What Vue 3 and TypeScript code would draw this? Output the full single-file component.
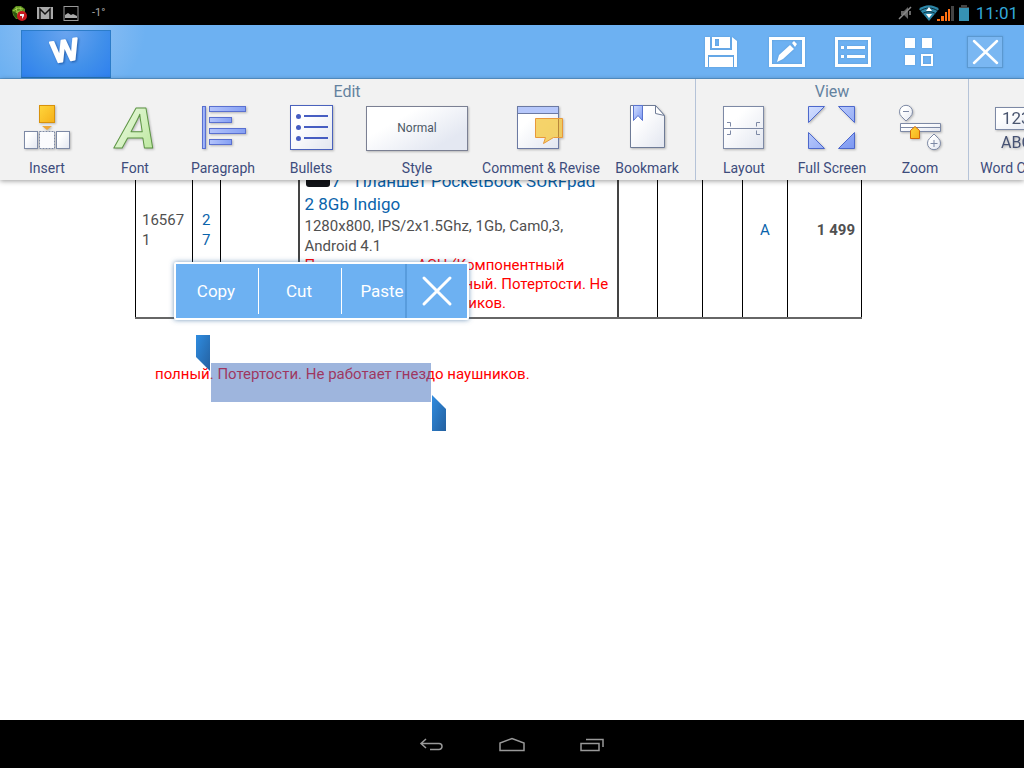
<script setup lang="ts">
import { ref } from 'vue'

interface Tool { id: string; label: string; size?: string }
interface Group { title: string; tools: Tool[] }

const groups: Group[] = [
  {
    title: 'Edit',
    tools: [
      { id: 'insert', label: 'Insert' },
      { id: 'font', label: 'Font' },
      { id: 'paragraph', label: 'Paragraph' },
      { id: 'bullets', label: 'Bullets' },
      { id: 'style', label: 'Style', size: 'wide' },
      { id: 'comment', label: 'Comment & Revise', size: 'wide' },
      { id: 'bookmark', label: 'Bookmark' },
    ],
  },
  {
    title: 'View',
    tools: [
      { id: 'layout', label: 'Layout' },
      { id: 'full', label: 'Full Screen' },
      { id: 'zoom', label: 'Zoom' },
    ],
  },
  { title: '', tools: [{ id: 'count', label: 'Word Count' }] },
]

const clipboardActions = ['Copy', 'Cut', 'Paste']
const menuOpen = ref(true)
</script>

<template>
  <div class="screen">
    <header class="status">
      <div class="notices">
        <svg width="18" height="18" viewBox="0 0 18 18" aria-hidden="true">
          <path d="M2 6 6 2 11 2 15 5 15 11 11 15 6 15 3 11Z" fill="#5c8f1e" />
          <path d="M3 7 8 4 13 5M4 10 9 7 14 8M6 3 8 13M10 3 12 9" stroke="#a5cf4d" stroke-width="1" fill="none" />
          <path d="M2 7 7 9 8 15 5 13Z" fill="#2f5a12" />
          <circle cx="12" cy="12" r="5" fill="#c8181e" />
          <path d="M10 10h4v2l-2 3v-3h-2z" fill="#eee" />
        </svg>
        <svg width="18" height="18" viewBox="0 0 18 18" aria-hidden="true">
          <rect x="1" y="3" width="16" height="12" fill="#aaa" />
          <path d="M4 15V5l5 5 5-5v10" fill="none" stroke="#111" stroke-width="1.500" />
        </svg>
        <svg width="18" height="18" viewBox="0 0 18 18" aria-hidden="true">
          <rect x="2" y="2.500" width="14" height="14" fill="none" stroke="#999" />
          <path d="M3 14V11l3-2 3 2 2-1 4 2v2z" fill="#aaa" />
        </svg>
        <span class="temp">-1°</span>
      </div>
      <div class="system">
        <svg width="16" height="18" viewBox="0 0 16 18" aria-hidden="true">
          <path d="M3 7h3l4-4v12l-4-4H3z" fill="#666" />
          <path d="M1 15 13 3M12 7v4" stroke="#888" stroke-width="1.500" />
        </svg>
        <svg width="36" height="18" viewBox="0 0 36 18" aria-hidden="true">
          <path d="M1 5C7 0 15 0 21 5L11 17Z" fill="#2c86a8" />
          <path d="M2 7C8 3 14 3 20 7M4 10c4-3 10-3 14 0" fill="none" stroke="#0c2c38" />
          <path d="m11 3 3 4H8zM11 14l3-4H8z" fill="#fff" />
          <path d="M19 17v-2h3v2zM23 17v-5h3v5zM27 17V8h2v9zM30 17V5h2v12z" fill="#ff7012" />
          <path d="M33 17V2h3v15z" fill="#444" />
        </svg>
        <svg width="12" height="18" viewBox="0 0 12 18" aria-hidden="true">
          <path d="M3 1h6v2h2v2H1V3h2z" fill="#444" />
          <rect x="1" y="4" width="10" height="13" fill="#3692b4" />
        </svg>
        <time>11:01</time>
      </div>
    </header>

    <div class="appbar">
      <button class="logo" aria-label="Document menu">
        <svg width="88" height="46" viewBox="0 0 88 46" aria-hidden="true">
          <text class="logo-letter" x="43" y="30" text-anchor="middle" transform="rotate(-9 43 20)">W</text>
        </svg>
      </button>
      <nav class="actions">
        <button aria-label="Save">
          <svg width="36" height="36" viewBox="0 0 36 36">
            <path d="M2 3h5v13h22V3l5 4v26h-3V21H5v12H2z" fill="#fff" />
            <path d="M9 3h18v11H9z M12 5v7h4V5z" fill="#fff" fill-rule="evenodd" />
            <rect x="6" y="23" width="24" height="10" fill="#fff" />
            <path d="M2 16h32v3H2z" fill="#fff" />
          </svg>
        </button>
        <button aria-label="Edit">
          <svg width="36" height="36" viewBox="0 0 36 36">
            <path d="M0 3h36v30H0z M3 6v24h30V6z" fill="#fff" fill-rule="evenodd" />
            <path d="m8 28 2-7L21 11l4 4-11 10zM23 9l2-2 3 3-2 3z" fill="#fff" />
          </svg>
        </button>
        <button aria-label="Outline">
          <svg width="36" height="36" viewBox="0 0 36 36">
            <path d="M0 3h36v30H0z M3 6v24h30V6z" fill="#fff" fill-rule="evenodd" />
            <path d="M6 12h3v3H6zM12 12h18v3H12zM6 21h3v3H6zM12 21h18v3H12z" fill="#fff" />
          </svg>
        </button>
        <button aria-label="Apps">
          <svg width="36" height="36" viewBox="0 0 36 36">
            <path d="M4 4h10v10H4zM21 4h10v10H21zM4 21h10v10H4z" fill="#fff" />
            <path d="M20 20h12v12H20z M22 22v8h8v-8z" fill="#fff" fill-rule="evenodd" />
          </svg>
        </button>
        <button aria-label="Close document">
          <svg width="36" height="36" viewBox="0 0 36 36">
            <rect x=".5" y="2.500" width="35" height="31" fill="#7ab7f2" stroke="#5b98d0" />
            <path d="m7 7 23 22M30 7 7 29" stroke="#fff" stroke-width="2.500" stroke-linecap="round" />
          </svg>
        </button>
      </nav>
    </div>

    <div class="ribbon">
      <svg class="defs" width="0" height="0" aria-hidden="true">
        <defs>
          <linearGradient id="paper" x1="0" y1="0" x2="1" y2="1"><stop offset="0.300" stop-color="#fff" /><stop offset="1" stop-color="#e2e6f0" /></linearGradient>
          <linearGradient id="blue" x1="0" y1="0" x2="1" y2="1"><stop offset="0" stop-color="#d3dfff" /><stop offset="1" stop-color="#7c98f2" /></linearGradient>
          <linearGradient id="bar"><stop offset="0" stop-color="#b4c4fb" /><stop offset="1" stop-color="#85a0f4" /></linearGradient>
          <linearGradient id="gold" x1="0" y1="0" x2="1" y2="1"><stop offset="0" stop-color="#ffd63c" /><stop offset="1" stop-color="#f6b01a" /></linearGradient>
          <linearGradient id="green" x1="0" y1="0" x2="1" y2="1"><stop offset="0" stop-color="#f4fdee" /><stop offset="1" stop-color="#b5e594" /></linearGradient>
        </defs>
      </svg>
      <section v-for="group in groups" :key="group.title" class="group">
        <h2>{{ group.title }}</h2>
        <div class="tools">
          <button v-for="tool in group.tools" :key="tool.id" class="tool" :class="tool.size">
            <span v-if="tool.id === 'style'" class="preview">Normal</span>
            <svg v-else class="icon" width="48" height="48" viewBox="0 0 48 48" aria-hidden="true">
              <g v-if="tool.id === 'insert'">
                <rect x="16.500" y="1.500" width="15" height="17" fill="url(#gold)" stroke="#d8920c" />
                <path d="M19 22h10l-5 4z" fill="#eda73a" />
                <rect x="1.500" y="27.500" width="13" height="17" fill="url(#paper)" stroke="#7d89a5" />
                <rect x="16.500" y="27.500" width="15" height="17" fill="#fbfbfd" stroke="#7d89a5" stroke-dasharray="2 1" />
                <rect x="33.500" y="27.500" width="13" height="17" fill="url(#paper)" stroke="#7d89a5" />
              </g>
              <text v-else-if="tool.id === 'font'" class="font-letter" x="25" y="44" text-anchor="middle">A</text>
              <g v-else-if="tool.id === 'paragraph'" stroke="#5a70d0" fill="url(#bar)">
                <rect x="3.500" y="2.500" width="3" height="42" />
                <rect x="10.500" y="2.500" width="36" height="5" />
                <rect x="10.500" y="13.500" width="22" height="5" />
                <rect x="10.500" y="24.500" width="36" height="5" />
                <rect x="10.500" y="35.500" width="22" height="5" />
              </g>
              <g v-else-if="tool.id === 'bullets'">
                <rect x="3.500" y="1.500" width="42" height="44" fill="url(#paper)" stroke="#4a62bd" />
                <path d="M17 12h24M17 23h24M17 34h24" stroke="#465dc2" stroke-width="2" />
                <g fill="#465dc2"><circle cx="11.500" cy="12.500" r="2.500" /><circle cx="11.500" cy="23.500" r="2.500" /><circle cx="11.500" cy="34.500" r="2.500" /></g>
              </g>
              <g v-else-if="tool.id === 'comment'">
                <rect x="0.500" y="2.500" width="41" height="42" fill="url(#paper)" stroke="#6c7aa3" />
                <rect x="0.500" y="2.500" width="41" height="7" fill="#b7c8fb" stroke="#6c7aa3" />
                <path d="M18.500 14.500h27v19h-9l-10 6 2-6h-10z" fill="#f5cc50" fill-opacity="0.850" stroke="#e8983a" />
                <path d="M41.500 15v18" stroke="#b8873a" />
              </g>
              <g v-else-if="tool.id === 'bookmark'">
                <path d="M7.500 1.500h25l9 10v32h-34z" fill="url(#paper)" stroke="#6e7b96" />
                <path d="M32.500 1.500v8l9 2z" fill="#fff" stroke="#6e7b96" />
                <path d="M10.500 1.500h9v15l-4.500-5-4.500 5z" fill="url(#blue)" stroke="#5a74cf" />
              </g>
              <g v-else-if="tool.id === 'layout'" fill="none" stroke="#7d89a5">
                <rect x="3.500" y="2.500" width="40" height="42" fill="url(#paper)" />
                <path d="M4 24.500h39M7 18.500h3.500v4M40 18.500h-3.500v4M7 30.500h3.500v-4M40 30.500h-3.500v-4" />
              </g>
              <path v-else-if="tool.id === 'full'" d="M.5 2.500h16l-16 16zM30.500 2.500h16v16zM.5 28.500v16h16zM46.500 28.500v16h-16z" fill="url(#blue)" stroke="#4d68cc" />
              <g v-else-if="tool.id === 'zoom'" fill="url(#paper)" stroke="#7d89a5">
                <path d="M4.500 19.500h40v8h-40zM4.500 23.500h40" />
                <path d="M10 17 5.500 12.500a6.500 6.500 0 1 1 9 0zM7 7.500h6" />
                <path d="m38 30 4.500 4.500a6.500 6.500 0 1 1-9 0zM34.500 39.500h7M38 36v7" />
                <path d="M14.500 34.500v-8l4.500-4 4.500 4v8z" fill="url(#gold)" stroke="#d0680e" />
              </g>
              <g v-else>
                <rect x="2.500" y="3.500" width="44" height="22" fill="url(#paper)" stroke="#7d89a5" />
                <text class="digits" x="9" y="20">123</text>
                <text class="letters" x="8" y="44">ABC</text>
              </g>
            </svg>
            <span class="label">{{ tool.label }}</span>
          </button>
        </div>
      </section>
    </div>

    <main class="document">
      <table>
        <tbody>
          <tr>
            <td class="code">165671</td>
            <td class="num">27</td>
            <td class="blank"></td>
            <td class="item">
              <a href="#"><span class="photo"></span>7" &nbsp;Планшет PocketBook SURFpad<br />2 8Gb Indigo</a>
              <p>1280x800, IPS/2x1.5Ghz, 1Gb, Cam0,3, Android 4.1</p>
              <p class="note">Подтверждено: АСЦ (Компонентный<br />ремонт) Комплект полный. Потертости. Не<br />работает гнездо наушников.</p>
            </td>
            <td class="c5"></td>
            <td class="c6"></td>
            <td class="c5"></td>
            <td class="grade">A</td>
            <td class="price">1 499</td>
          </tr>
        </tbody>
      </table>
      <p class="remark">полный. Потертости. Не работает гнездо наушников.</p>
      <div class="selection"></div>
      <svg class="handle start" width="14" height="36" viewBox="0 0 14 36" aria-hidden="true">
        <defs><linearGradient id="grip" x1="0" y1="0" x2="1" y2="1"><stop offset="0" stop-color="#2f8ce0" /><stop offset="1" stop-color="#24609f" /></linearGradient></defs>
        <path d="M0 0h14v36L0 22z" fill="url(#grip)" />
      </svg>
      <svg class="handle end" width="14" height="36" viewBox="0 0 14 36" aria-hidden="true">
        <path d="M0 0 14 14v22H0z" fill="url(#grip)" />
      </svg>
      <div v-if="menuOpen" class="menu">
        <div class="choices">
          <button v-for="action in clipboardActions" :key="action">{{ action }}</button>
        </div>
        <button class="dismiss" aria-label="Close" @click="menuOpen = false">
          <svg width="32" height="32" viewBox="0 0 32 32"><path d="m3 3 26 26M29 3 3 29" stroke="#fff" stroke-width="3" stroke-linecap="round" /></svg>
        </button>
      </div>
    </main>

    <footer class="navbar">
      <button aria-label="Back">
        <svg width="28" height="20" viewBox="0 0 28 20"><path d="M8 5 3 9.500 8 14M3 9.500h18a3 3 0 0 1 0 6H12" /></svg>
      </button>
      <button aria-label="Home">
        <svg width="28" height="20" viewBox="0 0 28 20"><path d="M2 16.500V9l12-4.500L26 9v7.500z" /></svg>
      </button>
      <button aria-label="Recent apps">
        <svg width="28" height="20" viewBox="0 0 28 20"><path d="M3 9.500h18v7H3zM8 5.500h17V13" /></svg>
      </button>
    </footer>
  </div>
</template>

<style>
body { overflow: hidden; }
</style>

<style scoped>
.screen { display: flex; flex-direction: column; height: 100vh; overflow: hidden; background: #fff; font-family: Roboto, "Noto Sans", sans-serif; }
button { padding: 0; border: 0; background: none; font: inherit; color: inherit; }
svg { display: block; }
svg.defs { position: absolute; }

.status { flex: none; display: flex; justify-content: space-between; height: 25px; background: #000; }
.notices, .system { display: flex; align-items: center; }
.notices { gap: 8px; padding-left: 10px; }
.temp { padding-left: 4px; font-size: 11px; color: #aaa; }
.system { gap: 4px; padding-right: 6px; }
.system time { padding-left: 2px; font-size: 17px; color: #33a9d8; }

.appbar { flex: none; display: flex; justify-content: space-between; align-items: stretch; height: 54px; box-sizing: border-box; border-bottom: 1px solid #5a9bd6; background: radial-gradient(circle at 66px 0, #8fc0f3 20px, #6db1f2 80px); }
.logo { margin: 5px 0 0 21px; border: 1px solid #2c7cc9; border-bottom-color: #2673b5; width: 90px; overflow: hidden; background: radial-gradient(ellipse at 50% 0, #6aa4ef, #4190ea 60%, #2f80ee); }
.logo svg { filter: drop-shadow(1px 1px 1px #1f5aa8); }
.logo-letter { font: 600 29px "Open Sans", sans-serif; fill: #fff; stroke: #fff; stroke-width: 2px; stroke-linejoin: round; }
.actions { display: flex; padding-right: 6px; }
.actions button { width: 66px; display: grid; place-items: center; }
.actions svg { filter: drop-shadow(0 0 1px #5c9bd6); }

.ribbon { flex: none; position: relative; z-index: 1; display: flex; overflow: hidden; height: 101px; background: #f2f2f2; box-shadow: 0 1px 5px rgba(0, 0, 0, 0.4); }
.group { flex: none; padding: 0 4px; border-right: 1px solid #b5c3d8; }
.group:first-of-type { padding-left: 3px; }
h2 { margin: 0; height: 25px; line-height: 25px; text-align: center; font-size: 16px; font-weight: 400; color: #64829f; }
.tools { display: flex; }
.tool { width: 88px; display: flex; flex-direction: column; align-items: center; color: #3d4c7c; }
.tool.wide { width: 124px; }
.icon { filter: drop-shadow(1px 1px 1px rgba(0, 0, 0, 0.25)); }
.preview { height: 45px; width: 102px; margin: 2px 0 1px; box-sizing: border-box; border: 1px solid #7b8093; background: linear-gradient(150deg, #fff 30%, #e4e8f2 80%); box-shadow: 1px 1px 2px rgba(0, 0, 0, 0.25); font-size: 12px; line-height: 43px; color: #4c5866; }
.label { margin-top: 6px; line-height: 20px; font-size: 14px; white-space: nowrap; }
.font-letter { font: italic 700 58px "Liberation Sans", sans-serif; fill: url(#green); stroke: #5c9444; stroke-width: 1px; stroke-linejoin: round; }
.digits { font-size: 17px; fill: #4a5670; }
.letters { font-size: 16px; fill: #465273; }

.document { flex: 1; position: relative; overflow: hidden; background: #fff; }
table { width: 727px; height: 178px; margin: -39px 0 0 135px; border-collapse: collapse; table-layout: fixed; font-size: 15px; line-height: 20px; color: #505050; }
td { border: 1px solid #000; border-bottom: 2px solid #666; padding: 0 6px; box-sizing: border-box; }
.code { width: 57px; word-break: break-all; }
.num { width: 28px; padding: 0 9px; color: #0a63ab; word-break: break-all; }
.blank { width: 78px; }
.item { width: 319px; padding: 0 5px 4px; border-left: 2px solid #444; border-right: 2px solid #444; vertical-align: bottom; }
.c5 { width: 40px; }
.c6 { width: 45px; }
.grade { width: 45px; text-align: center; color: #0a63ab; }
.price { width: 74px; text-align: right; font-weight: 700; }
.item a { font-size: 17px; line-height: 23px; color: #0a63ab; text-decoration: none; white-space: nowrap; }
.photo { display: inline-block; width: 24px; height: 28px; margin: 0 2px 0 1px; border-radius: 3px; background: #111318; }
.item p { margin: 0; }
.item .note { color: #f00; line-height: 19px; white-space: nowrap; }
.remark { margin: 45px 0 0 155px; font-size: 15px; line-height: 20px; color: #f00; white-space: nowrap; }
.selection { position: absolute; left: 211px; top: 183px; width: 220px; height: 39px; background: rgba(61, 107, 187, 0.5); }
.handle { position: absolute; }
.handle.start { left: 196px; top: 155px; }
.handle.end { left: 432px; top: 215px; }

.menu { position: absolute; left: 174px; top: 82px; display: flex; border: 2px solid #fff; border-radius: 2px; background: #6db1f2; box-shadow: 0 0 5px rgba(60, 110, 160, 0.7); color: #fff; font-size: 17px; }
.choices { display: flex; width: 229px; height: 54px; overflow: hidden; }
.choices button { flex: none; width: 83px; padding: 0 3px 0 0; background: linear-gradient(#fff, #fff) right center / 1px 46px no-repeat; }
.dismiss { width: 62px; display: grid; place-items: center; border-left: 2px solid #589cdd; }

.navbar { flex: none; display: flex; justify-content: center; height: 48px; background: #000; }
.navbar button { width: 80px; display: grid; place-items: center; }
.navbar path { fill: none; stroke: #999; stroke-width: 1.5px; }
</style>
